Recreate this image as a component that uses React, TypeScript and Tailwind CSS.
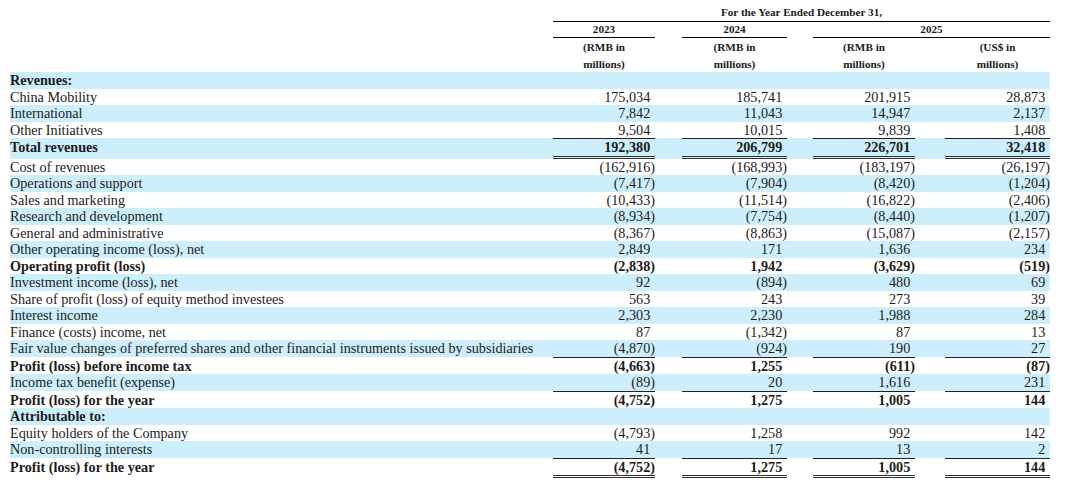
import React from "react";

type Row = {
  label: string;
  values?: string[];
  bold?: boolean;
  top?: boolean;
  double?: boolean;
};

const rows: Row[] = [
  { label: "Revenues:", bold: true },
  { label: "China Mobility", values: ["175,034", "185,741", "201,915", "28,873"] },
  { label: "International", values: ["7,842", "11,043", "14,947", "2,137"] },
  { label: "Other Initiatives", values: ["9,504", "10,015", "9,839", "1,408"] },
  { label: "Total revenues", values: ["192,380", "206,799", "226,701", "32,418"], bold: true, top: true, double: true },
  { label: "Cost of revenues", values: ["(162,916)", "(168,993)", "(183,197)", "(26,197)"] },
  { label: "Operations and support", values: ["(7,417)", "(7,904)", "(8,420)", "(1,204)"] },
  { label: "Sales and marketing", values: ["(10,433)", "(11,514)", "(16,822)", "(2,406)"] },
  { label: "Research and development", values: ["(8,934)", "(7,754)", "(8,440)", "(1,207)"] },
  { label: "General and administrative", values: ["(8,367)", "(8,863)", "(15,087)", "(2,157)"] },
  { label: "Other operating income (loss), net", values: ["2,849", "171", "1,636", "234"] },
  { label: "Operating profit (loss)", values: ["(2,838)", "1,942", "(3,629)", "(519)"], bold: true },
  { label: "Investment income (loss), net", values: ["92", "(894)", "480", "69"] },
  { label: "Share of profit (loss) of equity method investees", values: ["563", "243", "273", "39"] },
  { label: "Interest income", values: ["2,303", "2,230", "1,988", "284"] },
  { label: "Finance (costs) income, net", values: ["87", "(1,342)", "87", "13"] },
  { label: "Fair value changes of preferred shares and other financial instruments issued by subsidiaries", values: ["(4,870)", "(924)", "190", "27"] },
  { label: "Profit (loss) before income tax", values: ["(4,663)", "1,255", "(611)", "(87)"], bold: true, top: true },
  { label: "Income tax benefit (expense)", values: ["(89)", "20", "1,616", "231"] },
  { label: "Profit (loss) for the year", values: ["(4,752)", "1,275", "1,005", "144"], bold: true, top: true },
  { label: "Attributable to:", bold: true },
  { label: "Equity holders of the Company", values: ["(4,793)", "1,258", "992", "142"] },
  { label: "Non-controlling interests", values: ["41", "17", "13", "2"] },
  { label: "Profit (loss) for the year", values: ["(4,752)", "1,275", "1,005", "144"], bold: true, top: true, double: true },
];

const widths = ["w-[102px]", "w-[105px]", "w-[102px]", "w-[105px]"];
const gaps = ["w-[27px]", "w-[26px]", "w-[30px]"];

function Num({ v }: { v: string }) {
  const neg = v.endsWith(")");
  return (
    <span>
      {v}
      {!neg && <span className="invisible">)</span>}
    </span>
  );
}

export default function App() {
  return (
    <div
      className="w-[1080px] h-[490px] bg-white pl-[10px] text-[#1c1c1c] overflow-hidden"
      style={{ fontFamily: '"Liberation Serif", "Times New Roman", serif' }}
    >
      {/* header */}
      <div className="flex text-[11.2px] font-bold leading-none">
        <div className="w-[543px]" />
        <div className="w-[497px] h-[22px] border-b border-black flex items-end justify-center pb-[3px]">
          For the Year Ended December 31,
        </div>
      </div>
      <div className="flex text-[11.2px] font-bold leading-none">
        <div className="w-[543px]" />
        <div className="w-[102px] h-[16px] border-b border-black flex items-end justify-center pb-[2px]">2023</div>
        <div className="w-[27px]" />
        <div className="w-[105px] h-[16px] border-b border-black flex items-end justify-center pb-[2px]">2024</div>
        <div className="w-[26px]" />
        <div className="w-[237px] h-[16px] border-b border-black flex items-end justify-center pb-[2px]">2025</div>
      </div>
      <div className="flex text-[11.2px] font-bold leading-[16.5px] pt-[1px]">
        <div className="w-[543px]" />
        {["(RMB in", "(RMB in", "(RMB in", "(US$ in"].map((t, i) => (
          <React.Fragment key={i}>
            <div className={`${widths[i]} text-center`}>
              <div>{t}</div>
              <div>millions)</div>
            </div>
            {i < 3 && <div className={gaps[i]} />}
          </React.Fragment>
        ))}
      </div>

      {/* body */}
      <div className="w-[1040px] text-[14.2px] leading-[16.5px]">
        {rows.map((r, idx) => (
          <div
            key={idx}
            className={`flex ${idx % 2 === 0 ? "bg-[#cdeefb]" : "bg-white"} ${r.bold ? "font-bold" : ""}`}
          >
            <div className={`w-[543px] whitespace-nowrap ${r.top ? "pt-[1px]" : ""}`}>{r.label}</div>
            {[0, 1, 2, 3].map((i) => (
              <React.Fragment key={i}>
                <div
                  className={`${widths[i]} text-right ${r.top ? "border-t border-[#222]" : ""} ${
                    r.double ? "border-b-[3px] border-double border-b-[#333]" : ""
                  }`}
                >
                  {r.values ? <Num v={r.values[i]} /> : "\u00a0"}
                </div>
                {i < 3 && <div className={gaps[i]} />}
              </React.Fragment>
            ))}
          </div>
        ))}
      </div>
    </div>
  );
}
